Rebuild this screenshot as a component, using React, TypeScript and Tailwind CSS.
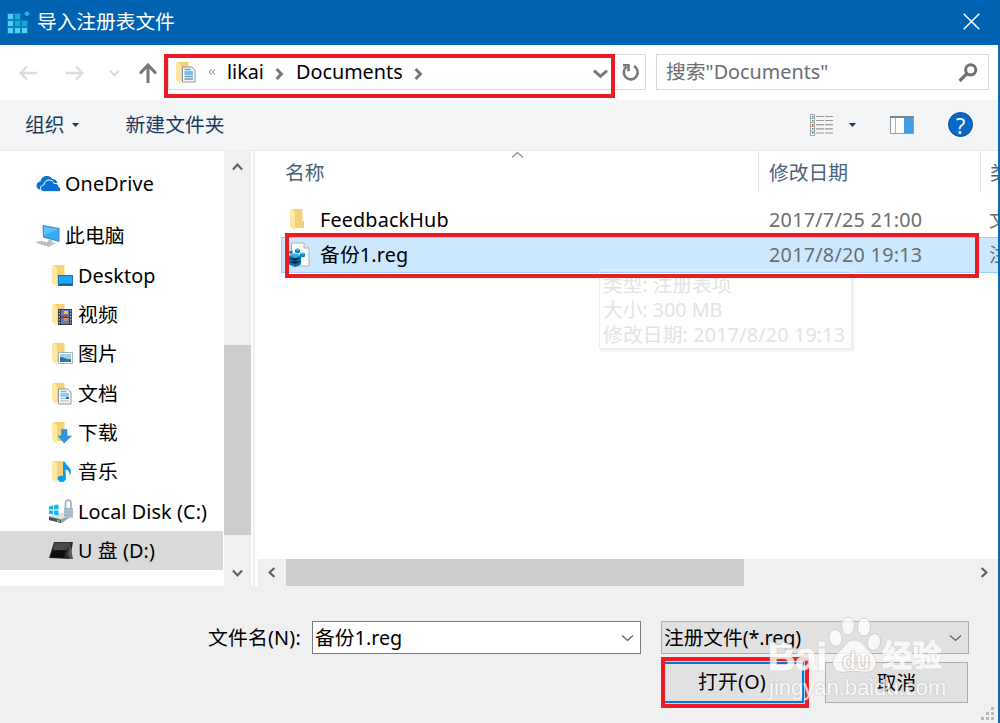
import React from 'react';

interface IconProps {
  className?: string;
}

interface TreeItem {
  label: string;
  icon: React.ReactNode;
  level: number;
  selected?: boolean;
}

interface FileItem {
  name: string;
  date: string;
  type: string;
  icon: React.ReactNode;
  selected?: boolean;
}

const AppIcon: React.FC<IconProps> = ({ className }) => (
  <svg className={className} width="24" height="24" viewBox="0 0 24 24">
    <path d="M0 2h14v7h7v14H0z" fill="#0a7fb8" />
    <path d="M20 0l3 2.800L20 5.600l-3-2.800z" fill="#2fb3e4" />
    <g fill="#4fd2fb">
      <path d="M1 3h5v5H1zM1 10h5v5H1zM1 17h5v5H1z" />
      <path d="M8 17h5v5H8zM15 17h5v5h-5z" />
    </g>
    <path d="M8 3h5v5H8zM8 10h5v5H8zM15 10h5v5h-5z" fill="#16a9dc" />
  </svg>
);

const Folder: React.FC<{ children?: React.ReactNode }> = ({ children }) => (
  <svg width="24" height="24" viewBox="0 0 24 24">
    <path d="M4 1h10.500v19H4z" fill="#f5d277" />
    <path d="M14.500 13h1.500v7h-1.500z" fill="#eec65f" />
    <path d="M2 1.500L4 1l3 3v18.500L2 19z" fill="#ffe8a3" />
    {children}
  </svg>
);

const DesktopIcon = () => (
  <Folder>
    <path d="M8 11h15v11H8z" fill="#0d75bb" />
    <path d="M9 12h13v7.500H9z" fill="#22a5f5" />
    <path d="M9 20h13v1H9z" fill="#0b5d98" />
  </Folder>
);

const VideoIcon = () => (
  <Folder>
    <path d="M8 6h14v16H8z" fill="#3a3d44" />
    <path d="M11 7h8v7h-8zM11 15h8v6h-8z" fill="#5a7fd8" />
    <path d="M14 8h4v3h-4z" fill="#e8c43a" />
    <path d="M11 12h7v2h-7z" fill="#c4453a" />
    <path d="M14 15h4v3h-4z" fill="#e08b38" />
    <path d="M9.300 7v15M20.700 7v15" stroke="#ccc" strokeWidth="1" strokeDasharray="1.500 1.500" />
  </Folder>
);

const PictureIcon = () => (
  <Folder>
    <path d="M8.500 10.500h14v11h-14z" fill="#fff" stroke="#aab3ba" />
    <path d="M10 12h11v8H10z" fill="#9cd0f3" />
    <path d="M10 15c4 0 6 3 11 2v3H10z" fill="#3d7462" />
    <path d="M10 18h11v2H10z" fill="#2f76ae" />
  </Folder>
);

const DocumentIcon = () => (
  <Folder>
    <path d="M8.500 7h9l3.500 3v12H8.500z" fill="#f6f8fa" stroke="#8f979e" />
    <path d="M10.500 9.500h6M10.500 12h8.500M10.500 14h8.500" stroke="#6fbdeb" strokeWidth="1.500" />
    <path d="M10.500 16.500h8.500M10.500 19h8.500" stroke="#a3b3c0" strokeWidth="1.100" />
    <path d="M16 15h3v2h-3z" fill="#42688d" />
  </Folder>
);

const DownloadIcon = () => (
  <Folder>
    <path d="M11.500 8.500h5.500v6.500h4.500L14.200 22 8 15h3.500z" fill="#3292e3" stroke="#257fc9" strokeWidth=".5" />
  </Folder>
);

const MusicIcon = () => (
  <Folder>
    <ellipse cx="11.600" cy="18.800" rx="4" ry="3.100" fill="#079bf3" />
    <path d="M13 2h2.300c.5 4 5.700 5 5.600 9.500 0 2-.7 3-1.500 4 .5-4-1.200-5.500-3.800-6v9.500H13z" fill="#079bf3" />
  </Folder>
);

const OneDriveIcon = () => (
  <svg width="25" height="18" viewBox="0 0 25 18">
    <path
      d="M5 14.500C1.500 14.500.500 12.500.500 10.500c0-2.400 1.700-4 4-4.100C5 2.700 8 .800 11 1c2.500.100 4.300 1.200 5.600 3.200C19 4 21 5.500 21.300 8L8 14.500z"
      fill="#0b72cf"
    />
    <path
      d="M8.500 16.700c-2.300 0-4-1.200-4-3.300 0-2 1.400-3.300 3.400-3.500C8.200 6.800 10.500 5 13 5c2.600 0 4.300 1.400 5.200 3.500 3.200-.300 4.700 1.300 4.600 3.500 1.300.4 1.900 1.300 1.900 2.500 0 1.300-1 2.200-2.400 2.200z"
      fill="#0b72cf"
      stroke="#fff"
      strokeWidth="1"
    />
  </svg>
);

const ComputerIcon = () => (
  <svg width="26" height="24" viewBox="0 0 26 24">
    <path d="M7.500 1L24.500 4v14L8 13.500z" fill="#3c8fc9" />
    <path d="M9 2.700L23.300 5v11.300L9 12.300z" fill="#36aef6" />
    <path d="M9 2.700L23.300 5 9 11z" fill="#5fc0fa" />
    <path d="M14 15.500l4 1.200-1 2 5-.2-4 2-6-2z" fill="#b7c0c7" />
    <path d="M0 18.500l5-1.800 14 3.500-5 3z" fill="#cdd1d4" />
    <path d="M3 18.500l12 3M6 17.500l11 2.900" stroke="#96a0a7" strokeDasharray="2 1" />
  </svg>
);

const DiskIcon = () => (
  <svg width="25" height="25" viewBox="0 0 25 25">
    <path d="M0 17l14-3 10 2-11 8L0 21z" fill="#9da4a8" />
    <path d="M0 17l14-3 10 2-12 4z" fill="#dfe3e5" />
    <path d="M0 18l12 3v3L0 21z" fill="#465056" />
    <path d="M8 21.500l3 .8" stroke="#54dc58" strokeWidth="1.500" />
    <path d="M0 7.500l4-1v4H0zM5 6.300L9.500 5.500v5H5zM0 11.500h4v4l-4-.8zM5 11.500h4.500v5L5 15.700z" fill="#14b7ef" />
    <path d="M16.500 9V4.500C16.500 0 22 0 22 4.500V9" fill="none" stroke="#a6b3bb" strokeWidth="1.800" />
    <path d="M15 9h9v10l-9-1z" fill="#b4c6d2" />
    <path d="M15 10h9M15 13h9M15 16h9" stroke="#8da4b3" />
  </svg>
);

const UsbIcon = () => (
  <svg width="25" height="20" viewBox="0 0 25 20">
    <path d="M5 1h19l-3 17-21-1z" fill="#292929" />
    <path d="M5.500 1.700h17L17 9l-13 0z" fill="#494949" />
    <path d="M21 3l3 15h-3l-2.500-5z" fill="#555" />
    <path d="M4 9.500h13L15 17 1 16z" fill="#0d0d0d" />
  </svg>
);

const RegIcon = () => (
  <svg width="24" height="26" viewBox="0 0 24 26">
    <path d="M3.500 1h12.500l5 5v18H3.500z" fill="#fafafa" stroke="#b3b3b3" />
    <path d="M16 1v5h5" fill="#e4e4e4" stroke="#b3b3b3" />
    <path d="M1 13.500l5.500-2 6.500 2v9L7.500 25 1 22.500z" fill="#0a78b5" />
    <path d="M1 13.500l5.500-2 6.500 2-6 2.300z" fill="#2fb4e6" />
    <path d="M7 16v9M4 14.800v9M10 15v9M1 16.500l6 2.300 6-2.300M1 19.500l6 2.300 6-2.300" stroke="#065585" strokeWidth=".6" />
    <path d="M9.500 6.500l2.500 1v3l-2.500 1-2.500-1v-3zM14.500 10.500l2.500 1v3l-2.500 1-2.500-1v-3zM3 8.500l1.800.7v2l-1.800.7-1.800-.7v-2z" fill="#0d87c4" />
    <path d="M9.500 6.500l2.500 1-2.500 1-2.500-1zM14.500 10.500l2.500 1-2.500 1-2.500-1z" fill="#41c3ee" />
  </svg>
);

const Chevron: React.FC<{ dir: 'up' | 'down' | 'left' | 'right'; width: number; height: number; stroke: string; weight: number }> = ({
  dir,
  width,
  height,
  stroke,
  weight,
}) => {
  const points = {
    up: '0,9 5,1 10,9',
    down: '0,1 5,9 10,1',
    left: '9,0 1,5 9,10',
    right: '1,0 9,5 1,10',
  };
  return (
    <svg className="block shrink-0 overflow-visible" width={width} height={height} viewBox="0 0 10 10" preserveAspectRatio="none">
      <polyline points={points[dir]} fill="none" stroke={stroke} strokeWidth={weight} vectorEffect="non-scaling-stroke" />
    </svg>
  );
};

const treeItems: TreeItem[] = [
  { label: '此电脑', icon: <ComputerIcon />, level: 0 },
  { label: 'Desktop', icon: <DesktopIcon />, level: 1 },
  { label: '视频', icon: <VideoIcon />, level: 1 },
  { label: '图片', icon: <PictureIcon />, level: 1 },
  { label: '文档', icon: <DocumentIcon />, level: 1 },
  { label: '下载', icon: <DownloadIcon />, level: 1 },
  { label: '音乐', icon: <MusicIcon />, level: 1 },
  { label: 'Local Disk (C:)', icon: <DiskIcon />, level: 1 },
  { label: 'U 盘 (D:)', icon: <UsbIcon />, level: 1, selected: true },
];

const files: FileItem[] = [
  { name: 'FeedbackHub', date: '2017/7/25 21:00', type: '文件夹', icon: <Folder /> },
  { name: '备份1.reg', date: '2017/8/20 19:13', type: '注册表项', icon: <RegIcon />, selected: true },
];

const TreeRow: React.FC<{ item: TreeItem }> = ({ item }) => (
  <div className={`flex h-[39.3px] w-[223px] items-center pt-[1px] ${item.selected ? 'bg-[#d9d9d9]' : ''}`}>
    <div className={`flex shrink-0 justify-end ${item.level === 0 ? 'w-[61px]' : 'w-[74px]'}`}>{item.icon}</div>
    <span className="ml-1 tracking-[0.1px]">{item.label}</span>
  </div>
);

const TitleBar = () => (
  <div className="flex h-[45px] items-center justify-between bg-[#0063b1] pr-5 pl-[7px] text-white">
    <div className="flex items-center">
      <AppIcon />
      <span className="mb-[2px] ml-[6px] tracking-[-0.1px]">导入注册表文件</span>
    </div>
    <svg className="mb-[2px]" width="17" height="17" viewBox="0 0 17 17">
      <path d="M.7.700l15.600 15.600M16.300.700L.700 16.300" stroke="#fff" strokeWidth="1.500" />
    </svg>
  </div>
);

const AddressBar = () => (
  <div className="flex h-[55px] items-start bg-white pt-[9px]">
    <div className="flex h-[37px] w-[164px] items-center pl-[19px]">
      <svg width="18" height="16" viewBox="0 0 18 16" fill="none" stroke="#dcdcdc" strokeWidth="2.500">
        <path d="M18 8H2M8 1.500L1.700 8 8 14.500" />
      </svg>
      <svg className="ml-[29px]" width="18" height="16" viewBox="0 0 18 16" fill="none" stroke="#dcdcdc" strokeWidth="2.500">
        <path d="M0 8h16M10 1.500L16.300 8 10 14.500" />
      </svg>
      <div className="ml-[26px]">
        <Chevron dir="down" width={9} height={6} stroke="#d8d8d8" weight={2} />
      </div>
      <svg className="ml-5" width="18" height="20" viewBox="0 0 18 20" fill="none" stroke="#787878" strokeWidth="3">
        <path d="M9 20V2M1 10.500L9 2l8 8.500" />
      </svg>
    </div>
    <div className="h-[44px] w-[451px] border-4 border-[#ed1c24]">
      <div className="flex h-[32px] items-center border-b border-l border-[#d9d9d9] pl-[5px]">
        <div className="mb-[2px]">
          <Folder>
            <path d="M8.500 6h9l3.500 3v12H8.500z" fill="#f6f8fa" stroke="#8f979e" />
            <path d="M10.500 8.500h6M10.500 11h8.500M10.500 13h8.500" stroke="#48aee6" strokeWidth="1.500" />
            <path d="M10.500 15.500h8.500M10.500 18h8.500" stroke="#7893a7" strokeWidth="1.300" />
          </Folder>
        </div>
        <svg className="mb-[3px] ml-[10px]" width="8" height="6" viewBox="0 0 8 6" fill="none" stroke="#777">
          <path d="M3.500.500L1 3l2.500 2.500M7 .500L4.500 3 7 5.500" />
        </svg>
        <span className="mb-1 ml-[11px] w-[37px]">likai</span>
        <div className="ml-[12px]">
          <Chevron dir="right" width={6} height={10} stroke="#777" weight={3} />
        </div>
        <span className="mb-1 ml-[14px] w-[109px]">Documents</span>
        <div className="ml-[10px]">
          <Chevron dir="right" width={6} height={10} stroke="#777" weight={3} />
        </div>
        <div className="mr-[4px] ml-auto">
          <Chevron dir="down" width={13} height={7} stroke="#777" weight={3} />
        </div>
      </div>
    </div>
    <div className="flex h-9 w-[31px] items-center justify-center border border-l-0 border-[#d9d9d9] pl-[2px]">
      <svg width="18" height="18" viewBox="0 0 18 18" fill="none" stroke="#777" strokeWidth="2.600">
        <path d="M4.500 3.800A7 7 0 1 0 12 3.200" />
        <path d="M1 2.200h5.500v6" />
      </svg>
    </div>
    <div className="ml-[10px] flex h-9 w-[333px] items-center justify-between border border-[#d9d9d9] pr-[10px] pl-[9px] text-[#6d6d6d]">
      <span>搜索"Documents"</span>
      <svg width="20" height="19" viewBox="0 0 20 19" fill="none" stroke="#707070">
        <circle cx="12.700" cy="6.800" r="5.100" strokeWidth="3" />
        <path d="M9 10.500L1.500 18" strokeWidth="3.200" />
      </svg>
    </div>
  </div>
);

const Toolbar = () => (
  <div className="flex h-[51px] items-center border-b border-[#ebebeb] bg-[#f4f5f7] pb-[1px] pl-[25px] text-[#1e395b]">
    <span>组织</span>
    <svg className="ml-[7px]" width="7" height="4" viewBox="0 0 7 4">
      <path d="M0 0h7L3.500 4z" fill="#1e395b" />
    </svg>
    <span className="ml-[47px]">新建文件夹</span>
    <div className="mr-[25px] ml-auto flex items-center">
      <svg width="23" height="22" viewBox="0 0 23 22">
        <path d="M.5.500h4v21h-4z" fill="#fff" stroke="#a6a6a6" />
        <path d="M0 4.500h5M0 8.500h5M0 12.500h5M0 17h5" stroke="#a6a6a6" />
        <path d="M6 2.500h8M15 2.500h8M6 6.500h8M15 6.500h8M6 10.700h8M15 10.700h8M6 14.800h8M15 14.800h8M6 19h8M15 19h8" stroke="#999" strokeWidth="1.200" />
        <path d="M2 2h1.500v1.500H2zM2 18h1.500v1.500H2z" fill="#247bc8" />
        <path d="M2 6h1.500v1.500H2zM2 14h1.500v1.500H2z" fill="#4c9b51" />
        <path d="M2 10h1.500v1.500H2z" fill="#d42424" />
      </svg>
      <svg className="ml-[16px]" width="7" height="4" viewBox="0 0 7 4">
        <path d="M0 0h7L3.500 4z" fill="#1e395b" />
      </svg>
      <svg className="ml-[34px]" width="24" height="18" viewBox="0 0 24 18">
        <path d="M.500.500h23v17H.500z" fill="#fff" stroke="#969ba1" />
        <path d="M0 0h24v2H0z" fill="#7e858d" />
        <path d="M5.500 2v15" stroke="#b5b5b5" />
        <path d="M14 2h9v15h-9z" fill="#429ce3" />
      </svg>
      <div className="ml-[34px] flex size-[25px] items-center justify-center rounded-full border border-[#07529a] bg-[#0868c5] text-[22px] leading-none text-white">
        ?
      </div>
    </div>
  </div>
);

const Sidebar = () => (
  <div className="flex h-[435px] w-[251px] shrink-0 justify-between bg-white">
    <div className="pt-[13px]">
      <div className="mb-[13px] flex h-[39.3px] items-center">
        <div className="ml-9">
          <OneDriveIcon />
        </div>
        <span className="ml-1 tracking-[0.15px]">OneDrive</span>
      </div>
      {treeItems.map(item => (
        <TreeRow key={item.label} item={item} />
      ))}
    </div>
    <div className="flex w-[27px] flex-col items-center bg-[#f0f0f0]">
      <div className="flex h-[27px] items-center pt-1">
        <Chevron dir="up" width={9} height={6} stroke="#606060" weight={2.2} />
      </div>
      <div className="mt-[167px] h-[190px] w-full bg-[#cdcdcd]" />
      <div className="mt-auto flex h-[27px] items-center">
        <Chevron dir="down" width={9} height={6} stroke="#606060" weight={2.2} />
      </div>
    </div>
  </div>
);

const FileTooltip = () => (
  <div className="absolute top-[118px] left-[341px] h-[80px] w-[253px] border border-[#ececec] pt-[2px] pl-[3px] text-[19.700px] leading-[25px] whitespace-nowrap text-[#e3e3e3] shadow-[2px_2px_2px_#eee]">
    <div>类型: 注册表项</div>
    <div>大小: 300 MB</div>
    <div className="tracking-[0.2px]">修改日期: 2017/8/20 19:13</div>
  </div>
);

const FileList = () => (
  <div className="relative ml-[3px] flex h-[435px] w-[740px] flex-col bg-white">
    <div className="relative flex h-[42px] items-center text-[#4c607a]">
      <div className="h-full w-[501px] border-r border-[#e5e5e5] pt-2 pl-[27px]">名称</div>
      <div className="h-full w-[222px] border-r border-[#e5e5e5] pt-2 pl-[10px]">修改日期</div>
      <div className="h-full w-[17px] overflow-hidden pt-2 pl-[9px] whitespace-nowrap">类型</div>
      <div className="absolute top-[1px] left-[254px]">
        <Chevron dir="up" width={11} height={6} stroke="#858585" weight={1.2} />
      </div>
    </div>
    <div className="relative mt-[9px]">
      {files.map(file => (
        <div
          key={file.name}
          className={`flex items-center ${file.selected ? 'ml-[23px] h-9 border border-r-0 border-[#99d1ff] bg-[#cce8ff] pl-[6px]' : 'h-[35px] pt-[1px] pl-[30px]'}`}
        >
          <div className="w-8 shrink-0">{file.icon}</div>
          <span className="w-[449px] shrink-0 tracking-[0.15px]">{file.name}</span>
          <span className="w-[220px] shrink-0 tracking-[0.25px] text-[#6d6d6d]">{file.date}</span>
          <span className="w-[9px] overflow-hidden whitespace-nowrap text-[#6d6d6d]">{file.type}</span>
        </div>
      ))}
    </div>
    <FileTooltip />
    {/* Outline around the backup entry */}
    <div className="absolute top-[82px] left-[27px] h-[45px] w-[694px] border-4 border-[#ed1c24]" />
    <div className="mt-auto flex h-[27px] items-center bg-[#f0f0f0]">
      <div className="flex w-7 justify-center">
        <Chevron dir="left" width={6} height={9} stroke="#606060" weight={2.2} />
      </div>
      <div className="h-full w-[458px] bg-[#cdcdcd]" />
      <div className="mr-[11px] ml-auto">
        <Chevron dir="right" width={6} height={9} stroke="#606060" weight={2.2} />
      </div>
    </div>
  </div>
);

const Watermark = () => (
  <div className="absolute top-[615px] left-[768px] h-[90px] w-[180px] font-['Liberation_Sans','Noto_Sans_CJK_SC',sans-serif] text-white opacity-80">
    <div className="absolute top-[19px] left-0 text-[38px] leading-[46px] font-bold [-webkit-text-stroke:1px_#fff] [text-shadow:0_0_2px_#aaa]">Bai</div>
    <svg className="absolute top-0 left-[60px]" width="55" height="60" viewBox="0 0 55 60">
      <g fill="#fff" stroke="#c4c4c4" strokeWidth=".8">
        <ellipse cx="20" cy="11" rx="6.500" ry="9" />
        <ellipse cx="36" cy="12" rx="6.500" ry="9" />
        <ellipse cx="7.500" cy="23" rx="6.500" ry="8.500" transform="rotate(-12 7.500 23)" />
        <ellipse cx="46" cy="27" rx="6.500" ry="8.500" transform="rotate(12 46 27)" />
        <path d="M26 25c-6 0-9 5-12 9-4 4-10 8-9 15 1 7 6 9 12 8 6-1 12-1 18 0 7 1 12-1 13-8 1-7-5-11-9-15-3-4-6-9-13-9z" />
      </g>
    </svg>
    <div className="absolute top-[31px] left-[74px] text-[23px] leading-[30px] font-bold text-white [text-shadow:0_0_2px_#888,0_0_1px_#999]">du</div>
    <div className="absolute top-[22px] left-[114px] text-[30px] leading-[38px] font-bold whitespace-nowrap [-webkit-text-stroke:1px_#fff] [text-shadow:0_0_2px_#aaa]">经验</div>
    <div className="absolute top-[60px] left-[1px] text-[22px] leading-[26px] whitespace-nowrap [text-shadow:0_0_2px_#aaa]">
      jingyan.baidu.com
    </div>
  </div>
);

const Footer = () => (
  <div className="h-[137px] bg-[#f0f0f0] pt-[35px]">
    <div className="flex h-[33px] items-center">
      <span className="ml-[208px] w-[104px] shrink-0 tracking-[0.2px]">文件名(N):</span>
      <div className="flex h-[33px] w-[329px] items-center justify-between border border-[#7a7a7a] bg-white pr-[7px] pl-[2px]">
        <span className="pt-[1px]">备份1.reg</span>
        <Chevron dir="down" width={11} height={6} stroke="#606060" weight={1.3} />
      </div>
      <div className="ml-5 flex h-[33px] w-[308px] items-center justify-between border border-[#adadad] bg-[#e1e1e1] pr-[7px] pl-[2px]">
        <span className="tracking-[-0.1px]">注册文件(*.reg)</span>
        <Chevron dir="down" width={11} height={6} stroke="#606060" weight={1.3} />
      </div>
    </div>
    <div className="mt-[3px] ml-[661px] flex items-start">
      <div className="h-[51px] w-[148px] border-4 border-[#ed1c24] bg-[#b5d7f3] pt-[1px]">
        <button className="h-[41px] w-[139px] border-y-2 border-r-2 border-[#0078d7] bg-[#e1e1e1] pr-[3px] pb-[1px] tracking-[0.2px]">打开(O)</button>
      </div>
      <button className="mt-[5px] ml-4 h-[41px] w-[143px] border border-[#adadad] bg-[#e1e1e1]">取消</button>
    </div>
  </div>
);

const App: React.FC = () => {
  return (
    <div className="relative h-[723px] w-[1000px] overflow-hidden bg-white font-['Noto_Sans','Noto_Sans_CJK_SC',sans-serif] text-[19.800px] leading-[28px] whitespace-nowrap text-black">
      <TitleBar />
      <div className="border-r-2 border-[#0d69b2]">
        <AddressBar />
        <Toolbar />
        <div className="flex">
          <Sidebar />
          <div className="ml-[2px] w-[2px] bg-[#f0f0f0]" />
          <FileList />
        </div>
        <Footer />
      </div>
      {/* Resize grip */}
      <svg className="absolute right-[5px] bottom-[2px]" width="14" height="14" viewBox="0 0 14 14" fill="#b8b8b8">
        <path d="M10 0h3v3h-3zM5 5h3v3H5zM10 5h3v3h-3zM0 10h3v3H0zM5 10h3v3H5zM10 10h3v3h-3z" />
      </svg>
      <Watermark />
    </div>
  );
};

export default App;
